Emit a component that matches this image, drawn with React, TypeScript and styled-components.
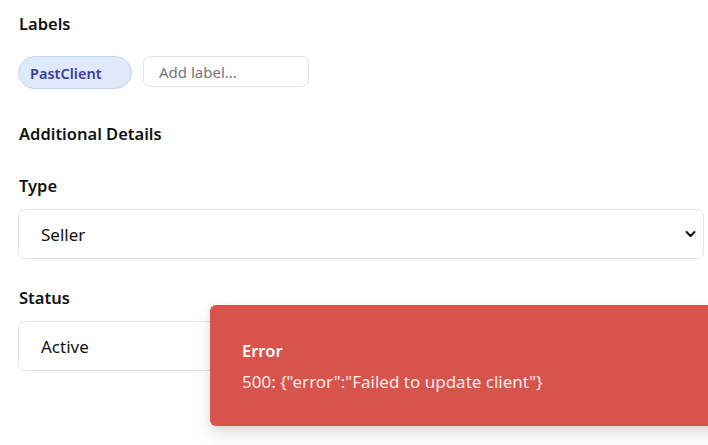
import React from "react";
import styled, { createGlobalStyle } from "styled-components";

const Global = createGlobalStyle`
  html, body { margin: 0; padding: 0; background: #ffffff; }
  body { font-family: "Noto Sans", "Open Sans", sans-serif; color: #111; overflow: hidden; }
  * { box-sizing: border-box; }
`;

const Page = styled.div`
  position: relative;
  width: 708px;
  height: 445px;
  padding: 12px 4px 0 18px;
  overflow: hidden;
`;

const SectionTitle = styled.h3<{ $mt?: number }>`
  margin: ${(p) => p.$mt ?? 0}px 0 0 1px;
  font-size: 16.5px;
  font-weight: 600;
  line-height: 24px;
  color: #111;
`;

const FieldLabel = styled.label<{ $mt: number }>`
  display: block;
  margin: ${(p) => p.$mt}px 0 0 1px;
  font-size: 16.5px;
  font-weight: 600;
  line-height: 24px;
  color: #111;
`;

const LabelRow = styled.div`
  display: flex;
  align-items: flex-start;
  gap: 11px;
  margin-top: 20px;
`;

const Chip = styled.span`
  display: inline-flex;
  align-items: center;
  width: 114px;
  height: 33px;
  padding-left: 11px;
  border-radius: 17px;
  background: #dfe9fc;
  border: 1px solid #c3d6f6;
  color: #3a3f9e;
  font-size: 14.5px;
  font-weight: 600;
`;

const LabelInput = styled.input`
  width: 166px;
  height: 31px;
  border: 1px solid #e2e2e2;
  border-radius: 7px;
  padding: 0 15px;
  font-family: inherit;
  font-size: 15px;
  color: #111;
  outline: none;
  &::placeholder { color: #767676; }
`;

const SelectBox = styled.div<{ $mt: number }>`
  display: flex;
  align-items: center;
  justify-content: space-between;
  height: 50px;
  margin-top: ${(p) => p.$mt}px;
  border: 1px solid #e3e3e3;
  border-radius: 7px;
  padding: 0 7px 0 22px;
  font-size: 17px;
  color: #111;
  background: #fff;
`;

const Chevron = styled.svg`
  width: 11px;
  height: 8px;
`;

const Toast = styled.div`
  position: absolute;
  left: 210px;
  top: 305px;
  width: 540px;
  height: 121px;
  background: #d6544c;
  border-radius: 6px;
  box-shadow: 0 8px 18px rgba(0, 0, 0, 0.12), 0 2px 6px rgba(0, 0, 0, 0.06);
  padding: 35px 32px;
  color: #fff;
`;

const ToastTitle = styled.div`
  font-size: 16.5px;
  font-weight: 600;
  line-height: 22px;
`;

const ToastMessage = styled.div`
  margin-top: 9px;
  font-size: 17px;
  line-height: 22px;
  color: #fbe9e8;
`;

const ChevronIcon = () => (
  <Chevron viewBox="0 0 11 8" fill="none">
    <path d="M1.5 2l4 4 4-4" stroke="#111" strokeWidth="2" strokeLinecap="round" strokeLinejoin="round" />
  </Chevron>
);

export default function App() {
  return (
    <>
      <Global />
      <Page>
        <SectionTitle>Labels</SectionTitle>
        <LabelRow>
          <Chip>PastClient</Chip>
          <LabelInput placeholder="Add label..." />
        </LabelRow>
        <SectionTitle $mt={33}>Additional Details</SectionTitle>
        <FieldLabel $mt={28}>Type</FieldLabel>
        <SelectBox $mt={11}>
          <span>Seller</span>
          <ChevronIcon />
        </SelectBox>
        <FieldLabel $mt={27}>Status</FieldLabel>
        <SelectBox $mt={11}>
          <span>Active</span>
          <ChevronIcon />
        </SelectBox>
        <Toast>
          <ToastTitle>Error</ToastTitle>
          <ToastMessage>500: {'{"error":"Failed to update client"}'}</ToastMessage>
        </Toast>
      </Page>
    </>
  );
}
